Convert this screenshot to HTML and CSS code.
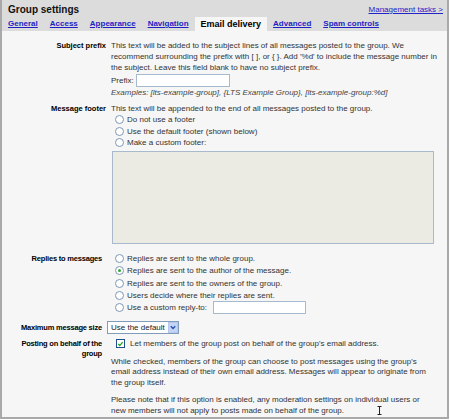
FILE: index.html
```html
<!DOCTYPE html>
<html>
<head>
<meta charset="utf-8">
<title>Group settings</title>
<link rel="stylesheet" href="styles.css">
</head>
<body>
<div class="panel">
  <div class="head">
    <div class="head-top">
      <h1 class="title">Group settings</h1>
      <a class="mgmt" href="#">Management tasks &gt;</a>
    </div>
    <nav class="tabs">
      <a class="tab" href="#">General</a>
      <a class="tab" href="#">Access</a>
      <a class="tab" href="#">Appearance</a>
      <a class="tab" href="#">Navigation</a>
      <span class="tab active">Email delivery</span>
      <a class="tab" href="#">Advanced</a>
      <a class="tab" href="#">Spam controls</a>
    </nav>
  </div>
  <div class="content">
    <div class="grid top">
      <div class="label">Subject prefix</div>
      <div class="field">
        <p class="desc">This text will be added to the subject lines of all messages posted to the group. We recommend surrounding the prefix with [ ], or { }. Add '%d' to include the message number in the subject. Leave this field blank to have no subject prefix.</p>
        <div class="prefix-row"><span>Prefix:</span><input class="text prefix-input" type="text"></div>
        <p class="examples">Examples: [lts-example-group], {LTS Example Group}, [lts-example-group:%d]</p>
      </div>

      <div class="label">Message footer</div>
      <div class="field">
        <p class="desc">This text will be appended to the end of all messages posted to the group.</p>
        <ul class="options">
          <li><input class="radio" type="radio" name="footer"><span>Do not use a footer</span></li>
          <li><input class="radio" type="radio" name="footer"><span>Use the default footer (shown below)</span></li>
          <li><input class="radio" type="radio" name="footer"><span>Make a custom footer:</span></li>
        </ul>
        <textarea class="footer-text" disabled></textarea>
      </div>
    </div>

    <div class="grid bottom">
      <div class="label">Replies to messages</div>
      <div class="field">
        <ul class="options replies">
          <li><input class="radio" type="radio" name="reply"><span>Replies are sent to the whole group.</span></li>
          <li><input class="radio" type="radio" name="reply" checked><span>Replies are sent to the author of the message.</span></li>
          <li><input class="radio" type="radio" name="reply"><span>Replies are sent to the owners of the group.</span></li>
          <li><input class="radio" type="radio" name="reply"><span>Users decide where their replies are sent.</span></li>
          <li><input class="radio" type="radio" name="reply"><span>Use a custom reply-to:</span><input class="text reply-input" type="text"></li>
        </ul>
      </div>

      <div class="label label-mid row-max">Maximum message size</div>
      <div class="field row-max">
        <div class="select">
          <select class="select-native"><option>Use the default</option></select>
          <span class="select-btn"><svg width="9" height="9" viewBox="0 0 9 9"><path d="M2 3.2 L4.5 5.7 L7 3.2" fill="none" stroke="#2a4fa8" stroke-width="1.6"/></svg></span>
        </div>
      </div>

      <div class="label label-post row-post">Posting on behalf of the group</div>
      <div class="field row-post">
        <div class="check-row"><span class="checkbox"><svg width="8" height="8" viewBox="0 0 8 8"><path d="M1.5 4 L3.2 5.8 L6.5 1.8" fill="none" stroke="#21a121" stroke-width="1.5"/></svg></span><span>Let members of the group post on behalf of the group's email address.</span></div>
        <p class="note">While checked, members of the group can choose to post messages using the group's email address instead of their own email address. Messages will appear to originate from the group itself.</p>
        <p class="note">Please note that if this option is enabled, any moderation settings on individual users or new members will not apply to posts made on behalf of the group.</p>
      </div>
    </div>
  </div>
  <span class="cursor"><svg width="5" height="9" viewBox="0 0 5 9"><path d="M0.5 0.5 H4.5 M2.5 0.5 V8.5 M0.5 8.5 H4.5" fill="none" stroke="#222" stroke-width="1"/></svg></span>
</div>
</body>
</html>
```
FILE: styles.css
```css
* { box-sizing: border-box; }
html, body { margin: 0; padding: 0; background: #fff; }
body {
  font-family: "Liberation Sans", Arial, sans-serif;
  font-size: 8px;
  line-height: 11px;
  color: #333;
}
p { margin: 0; }
.panel {
  position: relative;
  width: 449px;
  height: 419px;
  background: #f6f6f6;
  border-left: 2px solid #a9a9a9;
  border-right: 2px solid #a9a9a9;
  border-bottom: 2px solid #a9a9a9;
  overflow: hidden;
}
.head { background: #dcdcdc; }
.head-top {
  height: 17px;
  display: flex;
  align-items: center;
  justify-content: space-between;
  padding: 2px 4px 0 6px;
}
.title {
  margin: 0;
  font-size: 10px;
  font-weight: bold;
  color: #111;
  line-height: 12px;
}
.mgmt {
  color: #2323c8;
  text-decoration: underline;
  font-size: 8px;
}
.tabs {
  display: flex;
  height: 14px;
}
.tab {
  padding: 0 6px;
  line-height: 14px;
  font-weight: bold;
  font-size: 8px;
  color: #1f1fc4;
  text-decoration: underline;
}
.tab.active {
  background: #f6f6f6;
  color: #000;
  font-size: 9px;
  text-decoration: none;
}
.content { padding-top: 9px; }
.grid {
  display: grid;
  align-items: start;
}
.grid.top {
  grid-template-columns: 104px 330px;
  column-gap: 5px;
  row-gap: 5px;
}
.grid.bottom {
  margin-top: 9px;
  grid-template-columns: 100px 336px;
  column-gap: 3px;
  row-gap: 3px;
}
.label {
  text-align: right;
  font-weight: bold;
  font-size: 7.5px;
  color: #000;
}
.grid.bottom .label { letter-spacing: -0.2px; }
.label-mid { line-height: 13px; }
.label-post { line-height: 10px; }
.row-max { margin-top: 4px; }
.row-post { margin-top: 2px; }
.prefix-row {
  display: flex;
  align-items: center;
  gap: 2px;
  height: 14px;
}
.text {
  border: 1px solid #a5b9cf;
  background: #fff;
  height: 13px;
  padding: 0 2px;
  font: inherit;
}
.prefix-input { width: 94px; }
.examples {
  font-style: italic;
  color: #444;
}
.options {
  list-style: none;
  margin: 0;
  padding: 0 0 0 4px;
}
.options li {
  display: flex;
  align-items: center;
  height: 11.5px;
  gap: 3px;
}
.radio {
  appearance: none;
  -webkit-appearance: none;
  margin: 0;
  width: 9px;
  height: 9px;
  border: 1px solid #7f97b6;
  border-radius: 50%;
  background: #fff;
  position: relative;
  flex: none;
}
.radio:checked::after {
  content: "";
  position: absolute;
  left: 2px;
  top: 2px;
  width: 3px;
  height: 3px;
  border-radius: 50%;
  background: #35a635;
}
.footer-text {
  display: block;
  margin: 2px 0 0 1px;
  width: 322px;
  height: 93px;
  background: #ebebe4;
  border: 1px solid #a9bacd;
  resize: none;
}
.options.replies { padding-left: 10px; }
.options.replies li { height: 12.3px; }
.reply-input { width: 93px; height: 13px; margin-left: 3px; }
.select {
  display: inline-flex;
  align-items: center;
  height: 13px;
  border: 1px solid #7f9db9;
  background: #fff;
  margin-left: 2px;
}
.select-native {
  appearance: none;
  -webkit-appearance: none;
  border: 0;
  background: transparent;
  font: inherit;
  color: #222;
  padding: 0 3px;
  height: 11px;
  line-height: 11px;
  margin: 0;
}
.select-btn {
  display: flex;
  align-items: center;
  justify-content: center;
  width: 10px;
  height: 11px;
  background: #c3d4f7;
  border: 1px solid #b6c8ee;
}
.check-row {
  display: flex;
  align-items: center;
  gap: 5px;
  padding-left: 11px;
  height: 10px;
}
.checkbox {
  display: flex;
  align-items: center;
  justify-content: center;
  width: 9px;
  height: 9px;
  border: 1px solid #1f4f8f;
  background: #fff;
  flex: none;
}
.note {
  margin-top: 8px;
  padding-left: 6px;
  width: 324px;
  line-height: 10.5px;
}
.note + .note { margin-top: 7px; }
.cursor {
  position: absolute;
  left: 375px;
  top: 406px;
  line-height: 0;
}
```
